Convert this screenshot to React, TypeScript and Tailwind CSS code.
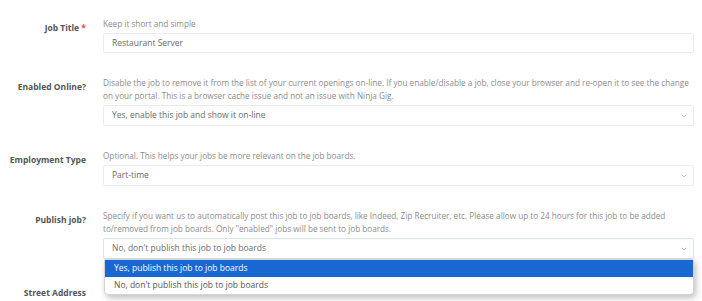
import { ChevronDown } from 'lucide-react';
import type { ReactNode } from 'react';

type RowProps = { label: ReactNode; help?: ReactNode; children?: ReactNode };

function Row({ label, help, children }: RowProps) {
  return (
    <div className="flex">
      <div className="w-[86px] shrink-0 pt-[4px] text-right text-[8.5px] leading-[13px] font-bold text-[#555]">{label}</div>
      <div className="ml-[17px] flex-1">
        {help && <div className="mb-[3px] whitespace-nowrap text-[8.2px] leading-[13px] text-[#8c8c8c]">{help}</div>}
        {children}
      </div>
    </div>
  );
}

function Select({ value, focused }: { value: string; focused?: boolean }) {
  return (
    <div className={`flex h-[21px] items-center justify-between rounded-[2px] border bg-white pl-[8px] pr-[5px] text-[8.5px] text-[#6b6b6b] ${focused ? 'border-[#d6e6e2]' : 'border-[#ececec]'}`}>
      <span>{value}</span>
      <ChevronDown size={8} strokeWidth={1.6} className="text-[#888]" />
    </div>
  );
}

export default function App() {
  return (
    <div className="h-[301px] w-[702px] overflow-hidden bg-white font-['Open_Sans',sans-serif]">
      <div className="flex flex-col gap-[23px] pr-[8px] pt-[17px]">
        <Row label={<>Job Title <span className="text-[#d9534f]">*</span></>} help="Keep it short and simple">
          <div className="flex h-[20px] items-center rounded-[2px] border border-[#ececec] bg-white pl-[8px] text-[8.5px] text-[#6b6b6b]">
            Restaurant Server
          </div>
        </Row>

        <Row
          label="Enabled Online?"
          help={<>Disable the job to remove it from the list of your current openings on-line. If you enable/disable a job, close your browser and re-open it to see the change<br />on your portal. This is a browser cache issue and not an issue with Ninja Gig.</>}
        >
          <Select value="Yes, enable this job and show it on-line" />
        </Row>

        <Row label="Employment Type" help="Optional. This helps your jobs be more relevant on the job boards.">
          <Select value="Part-time" />
        </Row>

        <Row
          label="Publish job?"
          help={<>Specify if you want us to automatically post this job to job boards, like Indeed, Zip Recruiter, etc. Please allow up to 24 hours for this job to be added<br />to/removed from job boards. Only "enabled" jobs will be sent to job boards.</>}
        >
          <div className="relative">
            <Select value="No, don't publish this job to job boards" focused />
            <div className="absolute left-[1px] right-0 top-[21px] z-10 overflow-hidden rounded-b-[4px] rounded-t-[1px] border border-[#d4d4d4] bg-white text-[8.5px] shadow-[2px_3px_6px_rgba(0,0,0,0.25)]">
              <div className="flex h-[17px] items-center bg-[#1967d2] pl-[9px] text-white">Yes, publish this job to job boards</div>
              <div className="flex h-[17px] items-center pl-[9px] text-[#555]">No, don't publish this job to job boards</div>
            </div>
          </div>
        </Row>

        <Row label="Street Address" />
      </div>
    </div>
  );
}
